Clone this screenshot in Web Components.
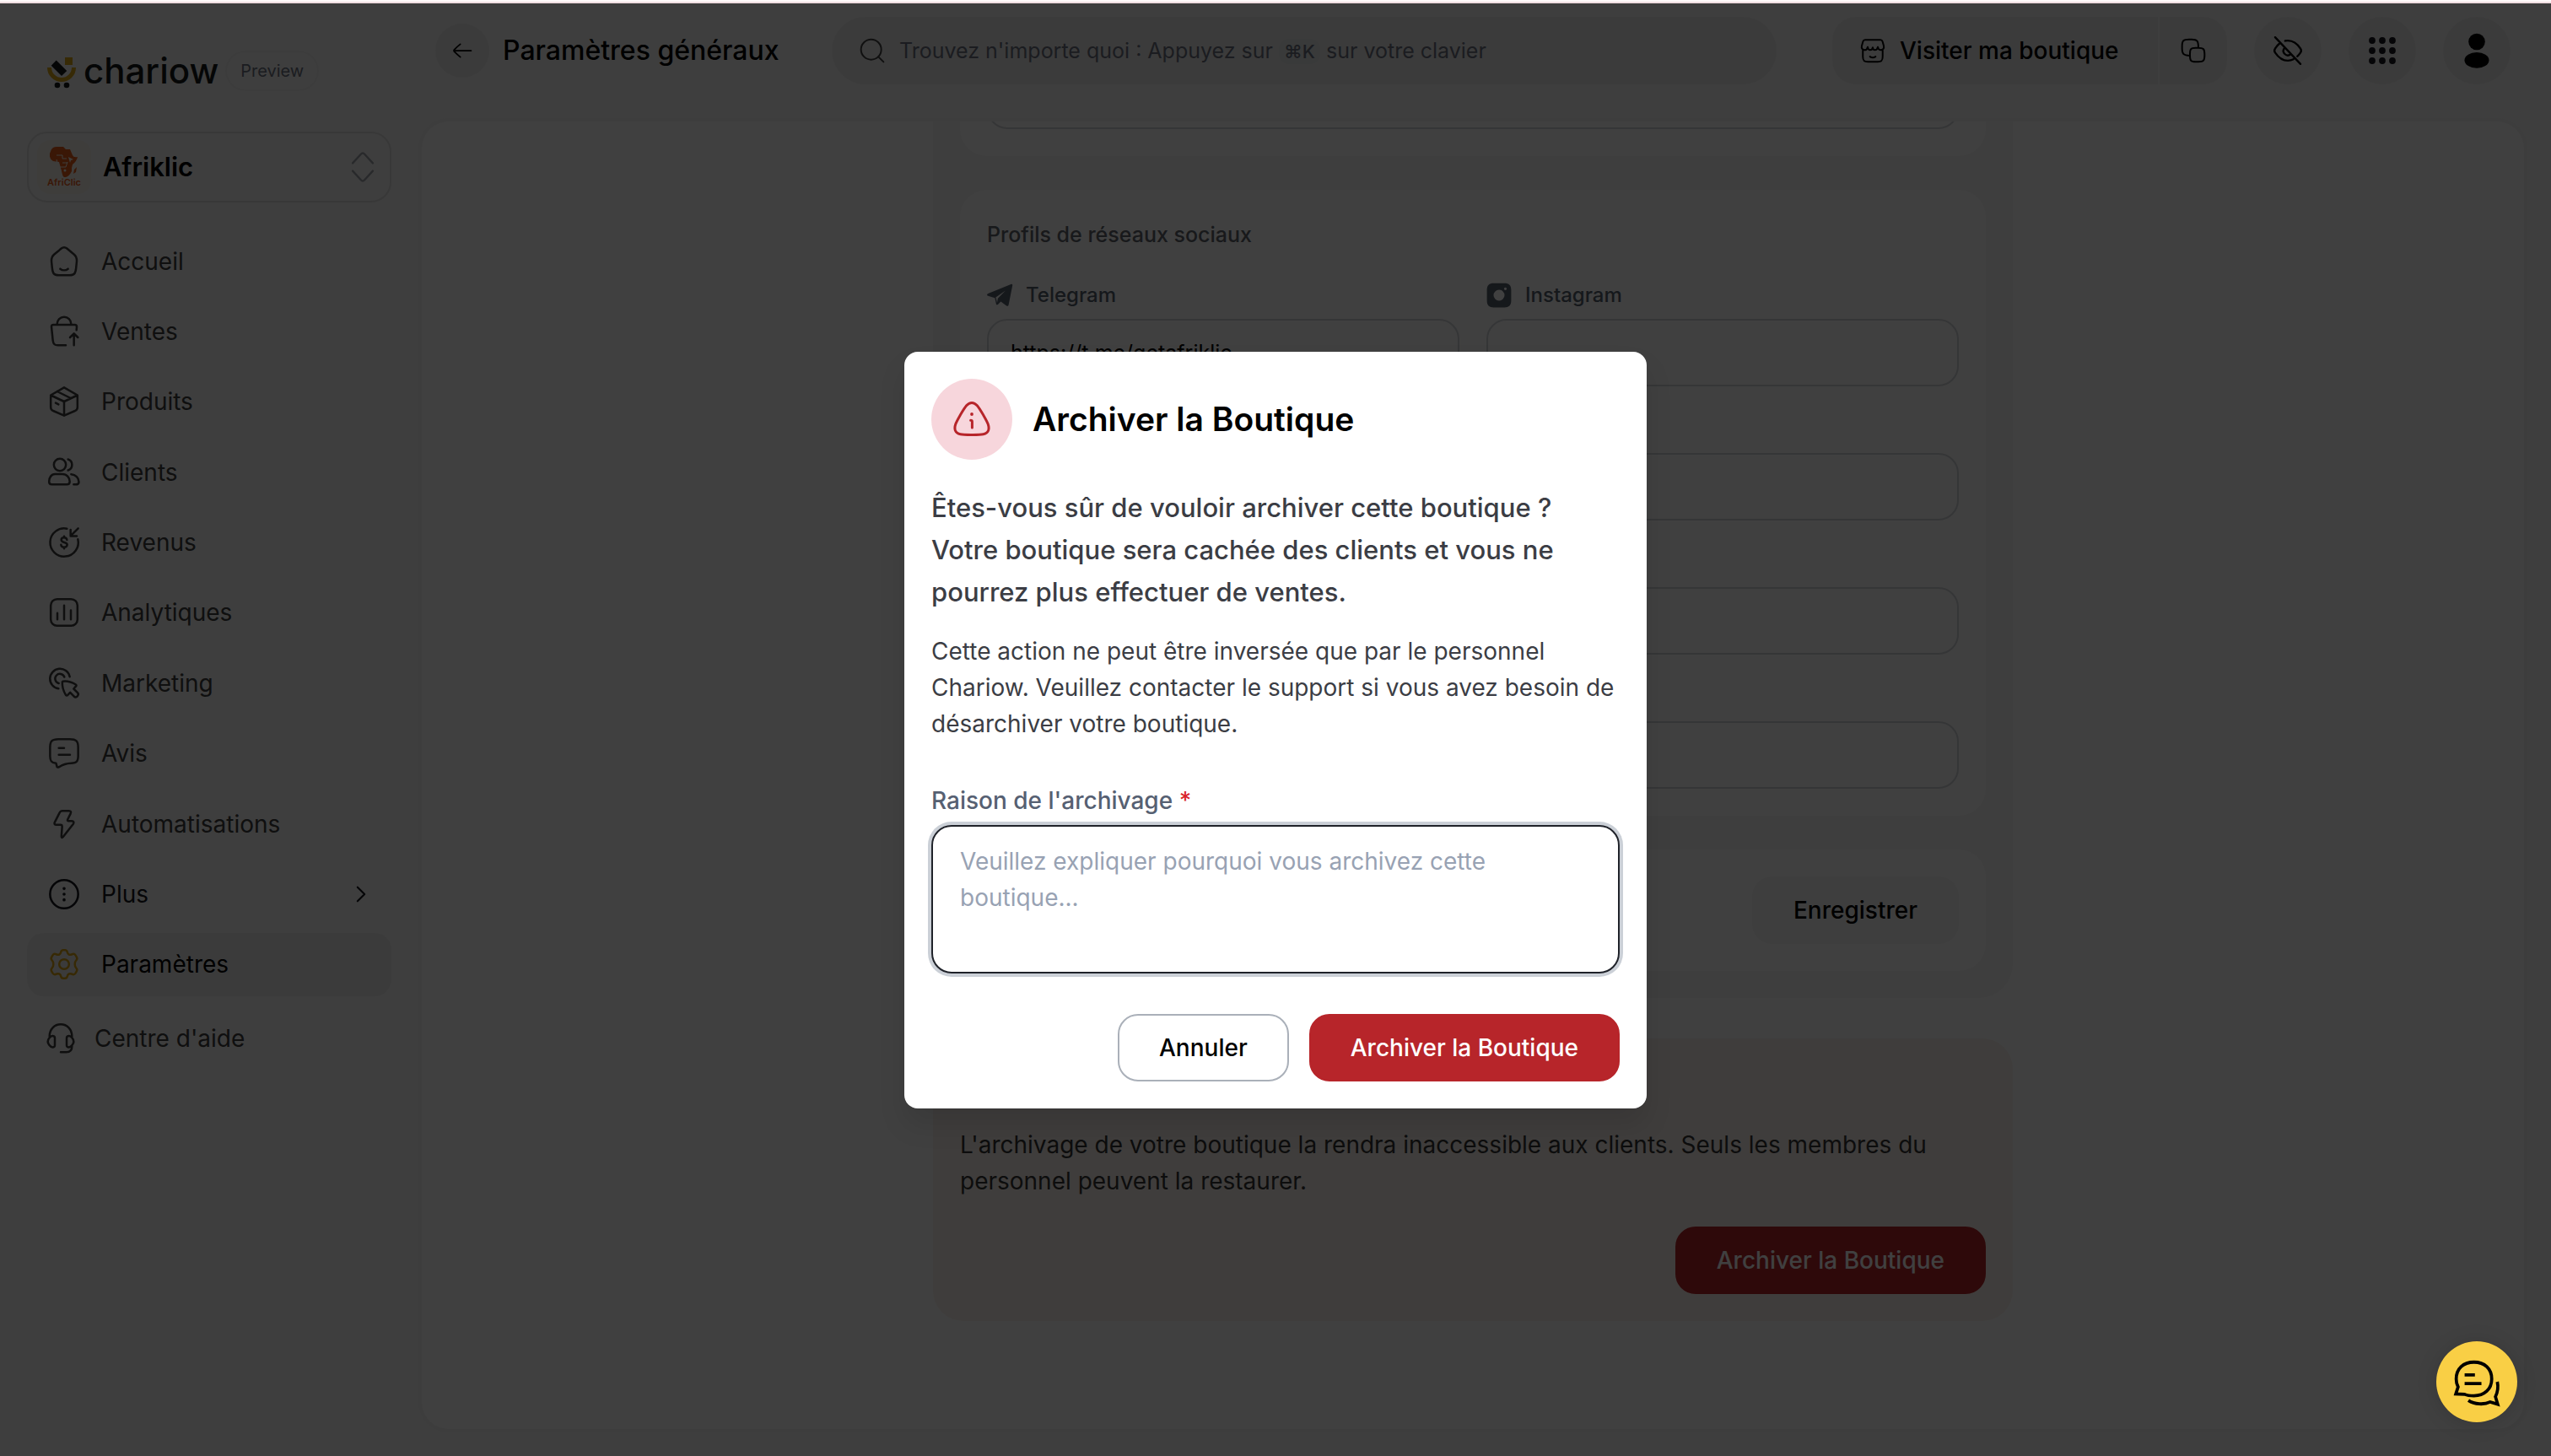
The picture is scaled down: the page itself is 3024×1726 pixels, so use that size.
<!DOCTYPE html>
<html lang="fr">
<head>
<meta charset="utf-8">
<meta name="viewport" content="width=device-width, initial-scale=1">
<title>Paramètres généraux - Chariow</title>
<style>
  body {
    margin: 0;
    height: 100vh;
    display: flex;
    flex-direction: column;
    overflow: hidden;
    font-family: Inter, "Liberation Sans", sans-serif;
    font-size: 28px;
    line-height: 36px;
    color: #000;
    background: #f6f6f6;
  }
</style>
</head>
<body>
<chariow-app></chariow-app>

<script>
const ICONS = {
  home: '<path d="M8.500 4 10 2.700a3.200 3.200 0 0 1 4 0l5 4.200c1.700 1.400 2.100 2.800 2 4.800l-.5 5c-.4 3.700-1.100 5.100-4.700 5.100H8.200c-3.600 0-4.300-1.400-4.700-5.100l-.5-5c-.1-2 .3-3.400 2-4.800z"/><path d="M9.200 17.200c1.600 1.300 4 1.300 5.600 0"/>',
  sales: '<path d="M7 7.200V6.600a5 5 0 0 1 10 0v.6M20.800 11l.2-2.400c0-.9-.5-1.400-1.400-1.400H4.300c-.9 0-1.400.5-1.300 1.400l1 9.800c.3 2.600 1.300 3.400 3.500 3.400h5.700M19 21.800v-8M16.200 16.200 19 13.400l2.800 2.800"/>',
  box: '<path d="M12 22 4.200 18.600c-1.200-.6-1.700-1.300-1.700-2.600V7.500L12 2l9.500 5.500V16c0 1.300-.5 2-1.700 2.600zM12 22V12M2.500 7.500 12 12l9.500-4.500M7 4.800 16.700 9.600M6 13l2 1"/>',
  users: '<circle cx="9" cy="6.600" r="4.300"/><path d="M14.800 2.700a4.100 4.100 0 0 1 0 7.800M5.500 13.200h5.300c3 0 5.200 2.500 5.200 5.400 0 1.200-.8 2-2 2H3.300c-1.200 0-2-.8-2-2 0-3 1.700-5.400 4.200-5.400zM17 13.300c3.200.2 5.500 2.600 5.500 5.400 0 1.200-.8 1.900-2.200 1.900h-1.500"/>',
  revenue: '<path d="M14 2.200a10 10 0 1 0 7.800 7.500M22 2l-5.300 5.300M16.600 3v4.500H21"/><path d="M14 10.200c-.1-1-.9-1.600-2-1.600s-2 .6-2 1.600c0 2.400 4.200 1.100 4.200 3.500 0 1-1 1.700-2.200 1.700s-2.200-.7-2.200-1.700M12 7.600v1M12 15.400v1"/>',
  chart: '<rect x="2.500" y="2.500" width="19" height="19" rx="4.500"/><path d="M7.200 17v-4.500M12 17V7M16.800 17v-6.500"/>',
  click: '<path d="M8 15.800A7.100 7.100 0 1 1 16 7.300M8.200 12a3.400 3.400 0 1 1 4-4.500"/><path d="M11 10.700c3-.5 6.500.6 9.300 2.200.6.4.5.9 0 1.300l-1.500 1.700 2.900 2.900c.8.8.3 1.700-.3 2.400-.7.7-1.600 1-2.300.2l-2.800-2.900-1.700 1.800c-.5.500-1 .6-1.400 0-1.700-2.800-2.700-6-2.500-9.300z"/>',
  chat: '<path d="M6.200 19c-3.200-.4-4.200-1.500-4.200-5V8c0-4.600 1.200-6 6-6h8c4.700 0 6 1.400 6 6v5.500c0 4.200-1 5.300-5 5.500-3.500.1-5.500.6-8.600 2.700-1 .6-1.800 0-1.600-.8zM8.200 8.200H12M8.200 13h8"/>',
  bolt: '<path d="M8.800 3.800c.5-1.100 1-1.300 2-1.300h4.600c1.500 0 1.700.8 1.200 1.900l-2.100 4.300c-.3.700 0 1.100.7 1.100h2.300c1.300 0 1.700 1 1 2l-7.200 9.200c-.8.9-1.300.6-1.200-.5l.5-6.700c0-1-.3-1.300-1-1.300H6.500c-1.200 0-1.700-.7-1.200-1.800z"/>',
  more: '<circle cx="12" cy="12" r="10"/><path stroke-width="2.200" d="M12 8v.01M12 12v.01M12 16v.01"/>',
  gear: '<circle cx="12" cy="12" r="3.500"/><path d="M9.700 3.500c.2-1 .8-1.500 1.700-1.500h1.200c.9 0 1.500.5 1.700 1.500.3 1.500 1.400 2.100 2.900 1.600l.9-.3c.9-.3 1.500 0 2 .8l.8 1.400c.5.8.4 1.500-.3 2.200-1.300 1.200-1.300 4.400 0 5.600.7.700.8 1.400.3 2.200l-.8 1.400c-.5.8-1.100 1.100-2 .8l-.9-.3c-1.500-.5-2.600.1-2.900 1.600-.2 1-.8 1.500-1.700 1.500h-1.200c-.9 0-1.500-.5-1.700-1.500-.3-1.500-1.400-2.100-2.900-1.600l-.9.3c-.9.3-1.500 0-2-.8L3.100 17c-.5-.8-.4-1.500.3-2.200 1.300-1.200 1.300-4.400 0-5.600-.7-.7-.8-1.400-.3-2.200l.8-1.400c.5-.8 1.100-1.100 2-.8l.9.300c1.500.5 2.600-.1 2.900-1.600z"/>',
  headset: '<path d="M4 10.500C4 5.600 7.400 2 12 2s8 3.600 8 8.500M7.800 11.800v5c0 .8-.5 1.400-1.300 1.500-1.200.1-2-.6-2.700-1.600-1.400-1.800-1.400-3.200 0-5 .7-1 1.500-1.700 2.700-1.500.8.100 1.300.7 1.300 1.600zM16.200 11.800v5c0 .8.5 1.400 1.300 1.500 1.200.1 2-.6 2.700-1.600 1.400-1.800 1.400-3.200 0-5-.7-1-1.500-1.700-2.700-1.500-.8.100-1.300.7-1.300 1.600zM20 17.500c0 3-1.500 4.200-4 4.200h-4"/>',
  right: '<path d="m9.500 7 5 5-5 5"/>',
  updown: '<path d="m5.500 9.500 5.300-5.800c.8-.9 1.600-.9 2.400 0l5.300 5.800M5.500 14.500l5.300 5.800c.8.900 1.600.900 2.400 0l5.300-5.800"/>',
  back: '<path d="M21 12H3.500M10 5.500c-2.500 2-5 4.300-6.300 5.700-.4.500-.4 1.100 0 1.600 1.300 1.400 3.800 3.700 6.300 5.700"/>',
  search: '<circle cx="11" cy="11" r="9"/><path d="m17.500 17.500 4.500 4.500"/>',
  store: '<path d="M3.200 11v6.500c0 3.200 1 4.500 4.300 4.500h9c3.300 0 4.300-1.300 4.300-4.500V11M5.200 2.500h13.600c1 0 1.600.4 1.900 1.400l1.100 3.900c.5 2-.8 3.700-2.600 3.700-1.500 0-2.500-1-2.700-2.700-.4 1.700-1.400 2.700-2.500 2.700-1.200 0-2-1-2-2.300-.3 1.300-1.100 2.300-2.300 2.300-1.100 0-2-1-2.200-2.700-.3 1.700-1.300 2.700-2.700 2.700-1.800 0-3.100-1.700-2.600-3.700l1.100-3.900c.3-1 .9-1.400 1.900-1.400zM9.500 17.300c1.400 1 3.600 1 5 0"/>',
  copy: '<path d="M9 15c0-4.500.8-5.500 5-5.500h2.500c4.300 0 5.500 1 5.500 5.500v1.500c0 4.500-1 5.500-5.500 5.500H14c-4.200 0-5-1-5-5.500zM16.500 9.500C16.500 3.500 15.500 2 10.500 2H8C3.200 2 2 3.200 2 8v2c0 5 1.200 6.200 7 6.500"/>',
  hidden: '<path d="M10 4.700c5-.9 9 2 11.500 5.800.7 1 .7 2 0 3-.7 1-1.500 2-2.400 2.800M6 6.500a16 16 0 0 0-3.500 4c-.7 1-.7 2 0 3C5 17.200 8.200 19.500 12 19.500c1.500 0 2.900-.3 4.200-1M9.300 10.300a3.300 3.300 0 0 0 4.700 4.500M2.500 2l19 20"/>',
  apps: '<g fill="currentColor" stroke="none"><circle cx="4" cy="4" r="2.600"/><circle cx="12" cy="4" r="2.600"/><circle cx="20" cy="4" r="2.600"/><circle cx="4" cy="12" r="2.600"/><circle cx="12" cy="12" r="2.600"/><circle cx="20" cy="12" r="2.600"/><circle cx="4" cy="20" r="2.600"/><circle cx="12" cy="20" r="2.600"/><circle cx="20" cy="20" r="2.600"/></g>',
  person: '<g fill="currentColor" stroke="none"><circle cx="12" cy="6" r="5.600"/><ellipse cx="12" cy="18.500" rx="8.300" ry="5.300"/></g>',
  telegram: '<path fill="currentColor" stroke="none" d="M22.700 1.500c1.300-.5 1.600.3 1.400 1.500l-3.600 18c-.3 1.300-1 1.500-2 .9l-5.400-4-2.800 2.800c-.6.600-1.500.5-1.600-.4L7.500 14.600 1 12.500c-1.300-.5-1.300-1.500 0-2.200zM17.500 7.500 8.300 14l1.300 5 .7-4z"/>',
  instagram: '<path fill="currentColor" stroke="none" fill-rule="evenodd" d="M7 .5h10c4.500 0 6.500 2 6.500 6.500v10c0 4.500-2 6.500-6.500 6.500H7C2.500 23.500.5 21.500.5 17V7C.5 2.500 2.500.5 7 .5zm5 6.300a5.200 5.200 0 1 0 0 10.400 5.200 5.200 0 0 0 0-10.400zm6-2.300a1.300 1.300 0 1 0 0 2.600 1.300 1.300 0 0 0 0-2.600z"/>',
  alert: '<path d="M5.300 9.300C8.200 4.400 9.600 2.200 12 2.200s3.800 2.200 6.700 7.100l.4.700c2.400 4.200 3.500 6.300 2.700 8.600-1 2.600-4 2.600-9.300 2.600h-1c-5.300 0-8.300 0-9.300-2.600-.8-2.300.3-4.400 2.700-8.600z"/><path d="M12.200 17v-3.600c0-.6-.2-.8-.9-.8"/><path stroke-width="1.900" d="M12 9v.01"/>',
  talk: '<path stroke-linecap="butt" stroke-linejoin="miter" d="M2.800 20.500 4 16.800A9.300 9.300 0 0 1 3 12.500C3 7 6.800 3.500 12.500 3.500S22 7 22 12.500s-4 9-9.500 9c-2 0-3.700-.2-5-.8zM7.500 10.300h5.500M7.500 15h9M9.500 24c3.300 2.200 8.500 2.400 11.700.8l4 1.200-1.200-4c1.200-2.500 1.600-5.300 1-8"/>'
};

class UiIcon extends HTMLElement {
  constructor() {
    super();
    this.attachShadow({ mode: 'open' });
  }

  connectedCallback() {
    const name = this.getAttribute('name');
    const size = this.getAttribute('size') || 40;
    const weight = this.getAttribute('weight') || 1.5;
    const box = name === 'talk' ? 28 : 24;
    this.shadowRoot.innerHTML = `
      <style>
        :host { display: block; flex: none; }
        svg { display: block; fill: none; stroke: currentColor; stroke-linecap: round; stroke-linejoin: round; overflow: visible; }
      </style>
      <svg width="${size}" height="${size}" viewBox="0 0 ${box} ${box}" stroke-width="${weight}" aria-hidden="true">${ICONS[name]}</svg>
    `;
  }
}

class UiButton extends HTMLElement {
  constructor() {
    super();
    this.attachShadow({ mode: 'open' });
    this.shadowRoot.innerHTML = `
      <style>
        :host { display: block; }
        button {
          box-sizing: border-box;
          height: 80px;
          padding: 0 47px;
          border: 2px solid transparent;
          border-radius: 24px;
          background: #f6f6f6;
          color: #000;
          font: inherit;
          font-weight: 500;
          white-space: nowrap;
        }
        :host([variant="outline"]) button { background: #fff; border-color: #aab0b9; }
        :host([variant="danger"]) button { background: #b7252a; border-color: #b7252a; color: #fff; }
      </style>
      <button type="button"><slot></slot></button>
    `;
  }
}

class NavItem extends HTMLElement {
  constructor() {
    super();
    this.attachShadow({ mode: 'open' });
  }

  connectedCallback() {
    this.shadowRoot.innerHTML = `
      <style>
        :host { display: grid; }
        a {
          display: flex;
          align-items: center;
          gap: 24px;
          padding: 0 16px 0 24px;
          border-radius: 20px;
          color: #3c3c3c;
          text-decoration: none;
        }
        .label { flex: 1; }
        :host([tone="dark"]) a { color: #14161c; }
        :host([active]) a { background: #ececec; color: #000; }
        :host([active]) .main { color: #d9a514; }
        :host([help]) a { padding: 0 20px; gap: 20px; }
      </style>
      <a href="#">
        <ui-icon class="main" name="${this.getAttribute('icon')}"></ui-icon>
        <span class="label"><slot></slot></span>
        ${this.hasAttribute('more') ? '<ui-icon name="right" weight="1.3"></ui-icon>' : ''}
      </a>
    `;
  }
}

class SideBar extends HTMLElement {
  constructor() {
    super();
    this.attachShadow({ mode: 'open' });
    this.shadowRoot.innerHTML = `
      <style>
        :host { display: block; flex: 0 0 432px; padding: 56px 36px 0 32px; }
        .brand { display: flex; align-items: center; height: 48px; padding-left: 24px; gap: 8px; }
        .brand svg { display: block; }
        .name { font-size: 42px; line-height: 48px; font-weight: 500; color: #14181a; }
        .pill {
          padding: 0 16px;
          border: 2px solid #f0f0f0;
          border-radius: 24px;
          font-size: 20px;
          line-height: 44px;
          color: #6b7280;
        }
        .store {
          display: flex;
          align-items: center;
          box-sizing: border-box;
          height: 84px;
          margin-top: 48px;
          padding: 0 10px;
          border: 2px solid #dedede;
          border-radius: 24px;
        }
        .tile {
          display: flex;
          flex-direction: column;
          align-items: center;
          justify-content: center;
          width: 64px;
          height: 64px;
          border-radius: 16px;
          background: #f8f2ea;
          color: #e85c18;
          font-size: 11px;
          line-height: 12px;
          font-weight: 600;
        }
        select {
          flex: 1;
          appearance: none;
          margin-left: 14px;
          padding: 0;
          border: 0;
          background: none;
          color: #000;
          font: inherit;
          font-size: 31px;
          line-height: 40px;
          font-weight: 600;
        }
        .store ui-icon { color: #a0a4ab; }
        nav { display: grid; grid-auto-rows: 1fr; gap: 8px; height: 909px; margin-top: 32px; }
        .help { display: grid; grid-auto-rows: 76px; margin-top: 12px; }
      </style>
      <div class="brand">
        <svg width="35" height="41" viewBox="0 0 35 41" aria-hidden="true">
          <path d="M2.500 16a14.500 14.500 0 0 0 29 0" fill="none" stroke="#dba71b" stroke-width="5"/>
          <path d="M21 4h9v9h-9z" fill="#dba71b"/>
          <path d="m10.700 7.500 12.500 12.500-6.200 6L4.700 13.700z" fill="#14181a"/>
          <circle cx="12" cy="37" r="3.300" fill="#14181a"/><circle cx="23" cy="37" r="3.300" fill="#14181a"/>
        </svg>
        <span class="name">chariow</span>
        <span class="pill">Preview</span>
      </div>
      <div class="store">
        <div class="tile">
          <svg width="34" height="36" viewBox="0 0 34 36" aria-hidden="true">
            <path fill="#e85c18" d="M2 3q2-3 6-3h8l3 3 5 0 3 7q1 3 6 2-1 5-6 9l-1 4 0 4q-3 6-7 7-3 1-4-3l-2-8-2-7-7-1q-5-3-4-9zM29 27l3-3-1 6-3 2z"/>
            <path fill="none" stroke="#f8f2ea" d="M8 10h7v4h5M8 15l2 9h9l2-6M15 19h6"/>
            <circle cx="12" cy="28" r="1.500" fill="#f8f2ea"/><circle cx="18" cy="28" r="1.500" fill="#f8f2ea"/>
            <path fill="#f8f2ea" d="m22 12 6 3-3 1-1 3z"/>
          </svg>
          <span>AfriClic</span>
        </div>
        <select aria-label="Boutique"><option>Afriklic</option></select>
        <ui-icon name="updown" size="44" weight="1.3"></ui-icon>
      </div>
      <nav>
        <nav-item icon="home">Accueil</nav-item>
        <nav-item icon="sales">Ventes</nav-item>
        <nav-item icon="box">Produits</nav-item>
        <nav-item icon="users">Clients</nav-item>
        <nav-item icon="revenue">Revenus</nav-item>
        <nav-item icon="chart">Analytiques</nav-item>
        <nav-item icon="click">Marketing</nav-item>
        <nav-item icon="chat">Avis</nav-item>
        <nav-item icon="bolt">Automatisations</nav-item>
        <nav-item icon="more" tone="dark" more>Plus</nav-item>
        <nav-item icon="gear" active>Paramètres</nav-item>
      </nav>
      <div class="help"><nav-item icon="headset" help>Centre d'aide</nav-item></div>
    `;
  }
}

class TopBar extends HTMLElement {
  constructor() {
    super();
    this.attachShadow({ mode: 'open' });
    this.shadowRoot.innerHTML = `
      <style>
        :host { display: flex; align-items: center; padding: 16px 48px 0 16px; }
        button {
          display: flex;
          align-items: center;
          justify-content: center;
          height: 80px;
          padding: 0;
          border: 0;
          background: #ececec;
          color: #000;
          font: inherit;
        }
        .left { display: flex; align-items: center; gap: 16px; flex: 0 0 470px; }
        .back { width: 64px; height: 64px; border-radius: 50%; }
        h1 { margin: 0; font-size: 32px; line-height: 40px; font-weight: 500; }
        .search {
          flex: 1;
          justify-content: flex-start;
          gap: 16px;
          padding: 0 32px;
          border-radius: 40px;
          color: #6b7280;
          font-size: 25px;
        }
        .search ui-icon { color: #404040; }
        kbd { padding: 2px 6px; border-radius: 12px; background: #e2e6e6; font: inherit; font-size: 22px; font-weight: 500; }
        .actions { display: flex; gap: 32px; margin-left: 66px; }
        .visit { display: flex; gap: 2px; }
        .shop {
          box-sizing: border-box;
          justify-content: flex-start;
          gap: 16px;
          width: 386px;
          padding-left: 32px;
          border-radius: 28px 0 0 28px;
          font-weight: 500;
          white-space: nowrap;
        }
        .copy { width: 80px; border-radius: 0 28px 28px 0; }
        .round { width: 80px; border-radius: 50%; }
        .dark { color: #14161c; }
      </style>
      <div class="left">
        <button class="back" aria-label="Retour"><ui-icon name="back" size="28"></ui-icon></button>
        <h1>Paramètres généraux</h1>
      </div>
      <button class="search">
        <ui-icon name="search" size="32"></ui-icon>
        <span>Trouvez n'importe quoi : Appuyez sur <kbd>⌘K</kbd> sur votre clavier</span>
      </button>
      <div class="actions">
        <div class="visit">
          <button class="shop"><ui-icon name="store" size="32"></ui-icon>Visiter ma boutique</button>
          <button class="copy" aria-label="Copier le lien"><ui-icon name="copy" size="32"></ui-icon></button>
        </div>
        <button class="round" aria-label="Masquer les montants"><ui-icon name="hidden" size="38"></ui-icon></button>
        <button class="round dark" aria-label="Applications"><ui-icon name="apps" size="36"></ui-icon></button>
        <button class="round" aria-label="Compte"><ui-icon name="person" size="42"></ui-icon></button>
      </div>
    `;
  }
}

class SocialField extends HTMLElement {
  constructor() {
    super();
    this.attachShadow({ mode: 'open' });
  }

  connectedCallback() {
    const label = this.getAttribute('label');
    const icon = this.getAttribute('icon');
    this.shadowRoot.innerHTML = `
      <style>
        :host { display: block; }
        .head { display: flex; align-items: center; gap: 16px; height: 32px; margin-bottom: 12px; color: #56606e; }
        label { font-size: 24px; line-height: 32px; font-weight: 500; }
        input {
          display: block;
          box-sizing: border-box;
          width: 100%;
          height: 80px;
          padding: 0 26px;
          border: 2px solid #d3d5d9;
          border-radius: 24px;
          background: #fff;
          color: #000;
          font: inherit;
          font-size: 25px;
        }
      </style>
      <div class="head">
        ${icon ? `<ui-icon name="${icon}" size="30"></ui-icon><label for="url">${label}</label>` : ''}
      </div>
      <input id="url" type="url" aria-label="${label}" value="${this.getAttribute('value') || ''}">
    `;
  }
}

class SettingsPage extends HTMLElement {
  constructor() {
    super();
    this.attachShadow({ mode: 'open' });
    // Scrolled to its end: the column is anchored to the bottom of the panel
    this.shadowRoot.innerHTML = `
      <style>
        :host {
          display: flex;
          flex-direction: column;
          justify-content: flex-end;
          align-items: center;
          gap: 48px;
          flex: 1;
          min-height: 0;
          margin: 44px 32px 32px 0;
          padding-bottom: 128px;
          box-sizing: border-box;
          border-radius: 32px;
          background: #fff;
          box-shadow: 0 0 0 4px #f2f2f2;
          overflow: hidden;
        }
        .column, .archive { box-sizing: border-box; flex: none; width: 100%; max-width: 1280px; padding: 32px; }
        .column { display: flex; flex-direction: column; gap: 40px; border-radius: 0 0 40px 40px; background: #f7f7f7; }
        .card { padding: 32px; border-radius: 32px; background: #fefefe; }
        h2 { margin: 0 0 35px; font-size: 25px; line-height: 42px; font-weight: 500; color: #60646c; }
        .grid { display: grid; grid-template-columns: 1fr 1fr; gap: 35px 32px; }
        .save { display: flex; justify-content: flex-end; }
        .archive {
          display: flex;
          flex-direction: column;
          justify-content: flex-end;
          align-items: flex-end;
          gap: 32px;
          min-height: 335px;
          border-radius: 36px;
          background: #fbf4ed;
        }
        p { margin: 0; width: 100%; line-height: 43px; color: #363636; }
      </style>
      <div class="column">
        <div class="card"><social-field label="Adresse"></social-field></div>
        <section class="card">
          <h2>Profils de réseaux sociaux</h2>
          <div class="grid">
            <social-field icon="telegram" label="Telegram" value="https://t.me/getafriklic"></social-field>
            <social-field icon="instagram" label="Instagram"></social-field>
            <social-field label="Facebook"></social-field>
            <social-field label="X"></social-field>
            <social-field label="LinkedIn"></social-field>
            <social-field label="YouTube"></social-field>
            <social-field label="TikTok"></social-field>
            <social-field label="WhatsApp"></social-field>
          </div>
        </section>
        <div class="card save"><ui-button>Enregistrer</ui-button></div>
      </div>
      <section class="archive">
        <p>L'archivage de votre boutique la rendra inaccessible aux clients. Seuls les membres du personnel peuvent la restaurer.</p>
        <ui-button variant="danger">Archiver la Boutique</ui-button>
      </section>
    `;
  }
}

class ArchiveDialog extends HTMLElement {
  constructor() {
    super();
    this.attachShadow({ mode: 'open' });
    this.shadowRoot.innerHTML = `
      <style>
        :host {
          position: absolute;
          inset: 0;
          display: grid;
          place-items: center;
          background: rgba(0, 0, 0, 0.75);
        }
        .box {
          box-sizing: border-box;
          width: 100%;
          max-width: 880px;
          padding: 32px;
          border-radius: 16px;
          background: #fff;
          box-shadow: 0 20px 32px rgba(0, 0, 0, 0.1);
        }
        header { display: flex; align-items: center; gap: 24px; }
        .badge {
          display: grid;
          place-items: center;
          width: 96px;
          height: 96px;
          border-radius: 50%;
          background: #f7d6dc;
          color: #b7252a;
        }
        h2 { margin: 0; font-size: 39px; line-height: 48px; font-weight: 600; }
        p { margin: 24px 0 0; line-height: 43px; color: #3b3d44; }
        .lead { margin-top: 32px; font-size: 31px; line-height: 50px; font-weight: 500; }
        label { display: block; margin-top: 48px; line-height: 43px; font-weight: 500; color: #566072; }
        label span { color: #d9252b; }
        textarea {
          display: block;
          box-sizing: border-box;
          width: 100%;
          height: 176px;
          margin-top: 7px;
          padding: 20px 32px;
          border: 2px solid #1f2229;
          border-radius: 24px;
          outline: 0;
          box-shadow: 0 0 0 4px #cbd0d7;
          font: inherit;
          line-height: 43px;
          resize: none;
        }
        textarea::placeholder { color: #98a2b3; opacity: 1; }
        footer { display: flex; justify-content: flex-end; gap: 24px; margin-top: 48px; }
      </style>
      <div class="box" role="dialog" aria-modal="true" aria-labelledby="title">
        <header>
          <div class="badge"><ui-icon name="alert" size="48"></ui-icon></div>
          <h2 id="title">Archiver la Boutique</h2>
        </header>
        <p class="lead">Êtes-vous sûr de vouloir archiver cette boutique ? Votre boutique sera cachée des clients et vous ne pourrez plus effectuer de ventes.</p>
        <p>Cette action ne peut être inversée que par le personnel Chariow. Veuillez contacter le support si vous avez besoin de désarchiver votre boutique.</p>
        <label for="reason">Raison de l'archivage <span>*</span></label>
        <textarea id="reason" placeholder="Veuillez expliquer pourquoi vous archivez cette boutique..."></textarea>
        <footer>
          <ui-button variant="outline">Annuler</ui-button>
          <ui-button variant="danger">Archiver la Boutique</ui-button>
        </footer>
      </div>
    `;
  }
}

class ChatLauncher extends HTMLElement {
  constructor() {
    super();
    this.attachShadow({ mode: 'open' });
    this.shadowRoot.innerHTML = `
      <style>
        :host { position: absolute; right: 40px; bottom: 40px; }
        button {
          display: grid;
          place-items: center;
          width: 96px;
          height: 96px;
          padding: 0;
          border: 0;
          border-radius: 50%;
          background: #f9cf45;
          color: #000;
          box-shadow: 0 2px 24px rgba(0, 0, 0, 0.15);
        }
      </style>
      <button aria-label="Discuter avec le support"><ui-icon name="talk" size="62" weight="1.7"></ui-icon></button>
    `;
  }
}

class ChariowApp extends HTMLElement {
  constructor() {
    super();
    this.attachShadow({ mode: 'open' });
    this.shadowRoot.innerHTML = `
      <style>
        :host { display: flex; flex-direction: column; flex: 1; min-height: 0; }
        .edge { height: 2px; border-bottom: 2px solid #f1dfe2; background: #fffafa; }
        .app { position: relative; display: flex; flex: 1; min-height: 0; }
        main { display: flex; flex-direction: column; flex: 1; min-width: 0; }
      </style>
      <div class="edge"></div>
      <div class="app">
        <side-bar></side-bar>
        <main>
          <top-bar></top-bar>
          <settings-page></settings-page>
        </main>
        <archive-dialog></archive-dialog>
        <chat-launcher></chat-launcher>
      </div>
    `;
  }
}

customElements.define('ui-icon', UiIcon);
customElements.define('ui-button', UiButton);
customElements.define('nav-item', NavItem);
customElements.define('side-bar', SideBar);
customElements.define('top-bar', TopBar);
customElements.define('social-field', SocialField);
customElements.define('settings-page', SettingsPage);
customElements.define('archive-dialog', ArchiveDialog);
customElements.define('chat-launcher', ChatLauncher);
customElements.define('chariow-app', ChariowApp);
</script>
</body>
</html>
